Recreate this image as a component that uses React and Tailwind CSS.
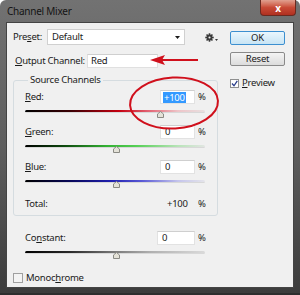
import React from "react";

const font = { fontFamily: '"Noto Sans", "Open Sans", sans-serif' };

const Thumb = ({ left }) => (
  <svg
    className="absolute top-[1px]"
    style={{ left: left - 3.5 }}
    width="7"
    height="7"
    viewBox="0 0 7 7"
  >
    <path d="M3.5 0.5 L6.5 3 L6.5 6.5 L0.5 6.5 L0.5 3 Z" fill="#e4e2d8" stroke="#8a8a84" strokeWidth="1" />
  </svg>
);

const Track = ({ gradient, thumb }) => (
  <div className="relative w-[180px] h-[3px]">
    <div className={`h-[3px] w-full rounded-full border-b border-[#d8d8d8] ${gradient}`} />
    <Thumb left={thumb} />
  </div>
);

const Mn = ({ children }) => <span className="underline underline-offset-[1px]">{children}</span>;

const ChannelRow = ({ label, value, selected, gradient, thumb, inputW = "w-[35px]" }) => (
  <div className="flex flex-col w-[182px]">
    <div className="flex items-center h-[14px]">
      <span className="flex-1 whitespace-nowrap">{label}</span>
      <div className={`${inputW} h-[14px] bg-white border border-[#e2e2e2] border-t-[#cfcfcf] flex items-center pl-[2px]`}>
        {selected ? (
          <span className="bg-[#3399ff] text-white px-[1px] leading-[11px]">{value}</span>
        ) : (
          <span className="pl-[2px]">{value}</span>
        )}
      </div>
      <span className="w-[9px] ml-[3px]">%</span>
    </div>
    <div className="mt-[6px]">
      <Track gradient={gradient} thumb={thumb} />
    </div>
  </div>
);

const Gear = () => (
  <div className="flex items-end gap-[1px]">
    <svg width="9" height="9" viewBox="0 0 10 10">
      <g stroke="#3a3a3a" strokeWidth="1.8" strokeLinecap="butt">
        <line x1="5" y1="0.3" x2="5" y2="9.7" />
        <line x1="0.3" y1="5" x2="9.7" y2="5" />
        <line x1="1.7" y1="1.7" x2="8.3" y2="8.3" />
        <line x1="8.3" y1="1.7" x2="1.7" y2="8.3" />
      </g>
      <circle cx="5" cy="5" r="3.2" fill="#3a3a3a" />
      <circle cx="5" cy="5" r="1.2" fill="#f0f0f0" />
    </svg>
    <svg width="3" height="2" viewBox="0 0 3 2" className="mb-[1px]">
      <path d="M0 0 H3 L1.5 2 Z" fill="#3a3a3a" />
    </svg>
  </div>
);

export default function App() {
  return (
    <div
      className="relative w-[300px] h-[295px] overflow-hidden text-[#1b1b1b] text-[9.5px] leading-[12px] tracking-[-0.25px]"
      style={font}
    >
      <div className="w-full h-full rounded-t-[6px] bg-gradient-to-b from-[#727272] via-[#5e5e5e] to-[#3c3c3c] flex flex-col px-[6px] pb-[5px] border-b-[2px] border-[#2e2e2e]">
        {/* title bar */}
        <div className="h-[22px] flex items-start justify-between">
          <span className="mt-[5px] ml-[1px] text-[10px] text-[#141414]">Channel Mixer</span>
          <div className="w-[36px] h-[16px] -mr-[2px] rounded-b-[4px] bg-gradient-to-b from-[#e0a090] via-[#c84a36] to-[#b03020] border border-[#6a2a20] border-t-0 flex items-center justify-center">
            <span className="text-white text-[10px] font-bold leading-none">x</span>
          </div>
        </div>

        {/* client area */}
        <div className="flex-1 bg-[#f0f0f0] border border-[#444] flex pt-[6px] pl-[6px]">
          {/* left column */}
          <div className="w-[205px] flex flex-col">
            <div className="flex items-center h-[16px]">
              <span className="w-[34px] whitespace-nowrap">Pre<Mn>s</Mn>et:</span>
              <div className="w-[138px] h-[16px] bg-white border border-[#d0d0d0] flex items-center justify-between pl-[4px] pr-[4px]">
                <span>Default</span>
                <svg width="5" height="3" viewBox="0 0 5 3">
                  <path d="M0 0 H5 L2.5 3 Z" fill="#1b1b1b" />
                </svg>
              </div>
              <div className="ml-[20px]">
                <Gear />
              </div>
            </div>

            <div className="flex items-center h-[14px] mt-[9px] pl-[2px]">
              <span className="w-[72px] whitespace-nowrap"><Mn>O</Mn>utput Channel:</span>
              <div className="w-[71px] h-[14px] bg-white border border-[#e0e0e0] border-t-[#cfcfcf] flex items-center pl-[3px]">Red</div>
            </div>

            <fieldset className="mt-[6px] w-[205px] border border-[#d5dce0] rounded-[3px] pb-[5px]">
              <legend className="ml-[14px] px-[2px] leading-[12px]">Source Channels</legend>
              <div className="pl-[11px] pt-[4px] flex flex-col gap-[12px]">
                <ChannelRow
                  label={<><Mn>R</Mn>ed:</>}
                  value="+100"
                  selected
                  thumb={135}
                  gradient="bg-[linear-gradient(to_right,#000_0%,#3a0004_25%,#c40010_52%,#e26070_68%,#eec4c8_85%,#e8e0e0_100%)]"
                />
                <ChannelRow
                  label={<><Mn>G</Mn>reen:</>}
                  value="0"
                  thumb={91}
                  gradient="bg-[linear-gradient(to_right,#000_0%,#0e4a0e_22%,#32b032_45%,#55d055_62%,#b8e4b8_85%,#e2e6e2_100%)]"
                />
                <ChannelRow
                  label={<><Mn>B</Mn>lue:</>}
                  value="0"
                  thumb={91}
                  gradient="bg-[linear-gradient(to_right,#000_0%,#08085a_25%,#2020b0_48%,#5a5ad6_65%,#c4c4ec_85%,#e4e4ea_100%)]"
                />
                <div className="flex items-center h-[12px] mt-[3px] w-[182px]">
                  <span className="flex-1">Total:</span>
                  <span className="w-[35px] pl-[5px]">+100</span>
                  <span className="w-[9px] ml-[1px]">%</span>
                </div>
              </div>
            </fieldset>

            <div className="pl-[12px] mt-[15px]">
              <ChannelRow
                label={<>Co<Mn>n</Mn>stant:</>}
                value="0"
                thumb={91}
                inputW="w-[38px]"
                gradient="bg-[linear-gradient(to_right,#000_0%,#2a2a2a_25%,#7a7a7a_50%,#b0b0b0_70%,#dadada_100%)]"
              />
            </div>

            <div className="flex items-center mt-[18px] gap-[3px]">
              <div className="w-[10px] h-[10px] border border-[#a0a0a0] bg-[#f4f4f4]" />
              <span>Monoc<Mn>h</Mn>rome</span>
            </div>
          </div>

          {/* right column */}
          <div className="ml-[12px] w-[55px] flex flex-col">
            <button className="mt-[2px] h-[14px] w-[55px] rounded-[2px] border border-[#3c8fd0] bg-gradient-to-b from-[#eaf6fd] to-[#c8e4f4] leading-none text-[#1b1b1b]">
              OK
            </button>
            <button className="mt-[7px] h-[14px] w-[55px] rounded-[2px] border border-[#8a8a8a] bg-gradient-to-b from-[#f4f4f4] to-[#dcdcdc] leading-none text-[#1b1b1b]">
              Reset
            </button>
            <div className="mt-[11px] flex items-center gap-[3px]">
              <div className="w-[9px] h-[9px] border border-[#8e8f8f] bg-white flex items-center justify-center">
                <svg width="7" height="7" viewBox="0 0 7 7">
                  <path d="M1 3.5 L3 5.8 L6.3 0.8" fill="none" stroke="#2a3e8c" strokeWidth="1.3" />
                </svg>
              </div>
              <span><Mn>P</Mn>review</span>
            </div>
          </div>
        </div>
      </div>

      {/* red annotation overlay */}
      <svg className="absolute inset-0 pointer-events-none" width="300" height="295" viewBox="0 0 300 295">
        <ellipse cx="174" cy="103" rx="44" ry="25.5" fill="none" stroke="#d0101c" strokeWidth="2" transform="rotate(-3 174 103)" />
        <line x1="160" y1="60" x2="198" y2="60" stroke="#d0101c" strokeWidth="2" />
        <path d="M150 60 L165 55 L162 60 L165 65 Z" fill="#d0101c" />
      </svg>
    </div>
  );
}
